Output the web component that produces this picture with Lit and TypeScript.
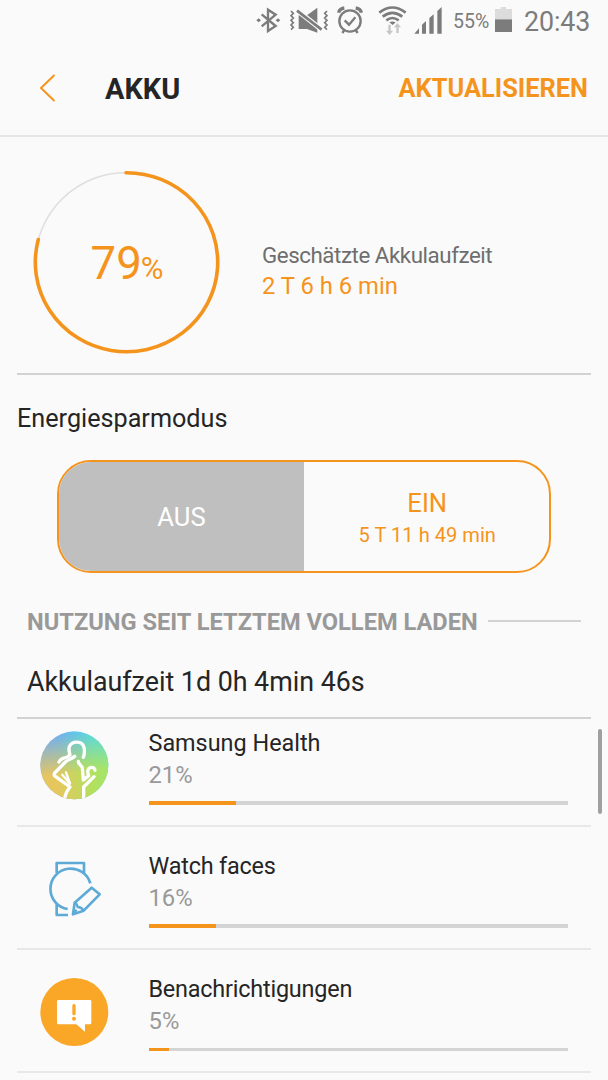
import { LitElement, html, css, svg } from "lit";
import { customElement, property } from "lit/decorators.js";

const healthIcon = html`<svg class="icon" viewBox="0 1 270 270">
  <defs>
    <linearGradient id="sky" x1="0" x2="1" y1="0.1" y2="0"><stop offset="0.25" stop-color="#74b1ee" /><stop offset="0.75" stop-color="#54d8e8" /></linearGradient>
    <linearGradient id="ground" x1="0" x2="1" y1="0.2" y2="0"><stop offset="0.1" stop-color="#e8c65e" /><stop offset="0.62" stop-color="#b2e05e" /><stop offset="1" stop-color="#9de772" /></linearGradient>
    <linearGradient id="fade" x1="0" x2="0.15" y1="0" y2="1"><stop offset="0.2" stop-color="#000" /><stop offset="0.64" stop-color="#fff" /></linearGradient>
    <mask id="m"><rect width="270" height="270" fill="url(#fade)" /></mask>
    <clipPath id="c"><circle cx="133" cy="134" r="102" /></clipPath>
  </defs>
  <circle cx="133" cy="134" r="102" fill="url(#sky)" />
  <g mask="url(#m)"><circle cx="133" cy="134" r="102" fill="url(#ground)" /></g>
  <g clip-path="url(#c)" fill="none" stroke="#fff" stroke-width="10" stroke-linecap="round" stroke-linejoin="round">
    <path d="M160 110c4-9 4-20 2-30-5-20-36-21-44-2-3 9 0 18 2 25-6 7-13 8-21 10-6 2-10 6-12 11" />
    <path d="M134 107c-10 8-22 10-28 17L74 157c-3 4-2 8 3 11l43 31c-7 9-14 20-16 34" />
    <path d="M97 162l23 27-12-34" stroke-width="7" />
    <path d="M145 122c-1 9 10 10 12 20l3 36 16-13c-5-13-3-21 5-24 8-3 14 2 14 8" />
    <path d="M192 168l-31 31v38" />
  </g>
</svg>`;

const watchIcon = html`<svg class="icon" viewBox="-15 -19 270 270" fill="none" stroke="#5eaad7" stroke-width="8" stroke-linejoin="round">
  <path d="M65 68V38h82v31" />
  <path d="M166 99A61 61 0 1 0 98 176" />
  <path d="M65 160v34h34" />
  <path d="M170 112l24 20-48 49-32 11 5-35z" />
  <path d="M119 157c7 3 8 7 9 13 8 0 13 3 18 11M114 192l11-14" stroke-width="7" />
</svg>`;

const noticeIcon = html`<svg class="icon" viewBox="0 5 270 270">
  <circle cx="133" cy="140" r="102" fill="#faa627" />
  <path d="M85 104h95q4 0 4 4v65q0 4-4 4h-15v22l-26-22H85q-4 0-4-4v-65q0-4 4-4z" fill="#fff" />
  <path d="M132 121v24" stroke="#faa627" stroke-width="10" stroke-linecap="round" />
  <circle cx="132" cy="160" r="6" fill="#faa627" />
</svg>`;

@customElement("status-bar")
class StatusBar extends LitElement {
  static styles = css`
    :host { display: flex; align-items: center; height: 42px; padding-left: 255px; color: #7c7c7c; font-family: Roboto, sans-serif; }
    svg { display: block; flex: none; height: 42px; }
    .bt { width: 27px; } .mute { width: 52px; } .alarm { width: 43px; } .wifi { width: 33px; } .signal { width: 33px; }
    .percent { width: 52px; padding-left: 10px; box-sizing: border-box; font-size: 19.5px; }
    .battery { width: 17px; }
    .clock { margin-left: 12px; font-size: 26.8px; letter-spacing: -0.1px; padding-top: 1px; }
  `;
  render() {
    return html`
      <svg class="bt" viewBox="30 0 81 126" fill="none" stroke="#7c7c7c" stroke-width="7"><path d="M50 43l42 35-23 15V29l23 15-42 35" /><path d="M34 61l7-6 7 6-7 6zM92 61l7-6 7 6-7 6z" fill="#7c7c7c" stroke="none" /></svg>
      <svg class="mute" viewBox="111 0 156 126" fill="none" stroke="#7c7c7c"><path d="M161 46h25l31-23v75l-31-11h-25z" fill="#7c7c7c" stroke="none" /><path d="M155 30l76 60" stroke="#fafafa" stroke-width="15" /><path d="M156 32l74 57" stroke-width="8" /><path d="M138 33l7 7-7 7 7 7-7 7 7 7-7 7 7 7-7 7M246 33l-7 7 7 7-7 7 7 7-7 7 7 7-7 7 7 7" stroke-width="5" /></svg>
      <svg class="alarm" viewBox="267 0 129 126" fill="none" stroke="#7c7c7c" stroke-width="7"><circle cx="315" cy="63" r="32" /><path d="M299 61l13 13 19-22" /><path d="M281 38q2-12 17-14M349 38q-2-12-17-14" stroke-width="10" /><path d="M298 90l-6 9M332 90l6 9" stroke-width="7" /></svg>
      <svg class="wifi" viewBox="384 0 99 126" fill="none" stroke="#7c7c7c" stroke-width="8"><path d="M391 38q39-31 79 0M401 50q29-23 59 0M412 61q18-14 37 0" /><path d="M421 67q9-5 19 0l-9 8z" fill="#7c7c7c" stroke="none" /><path d="M418 74h7v18h7l-10 13-11-13h7zM442 99h7V82h7l-11-13-10 13h7z" fill="#c6c6c6" stroke="none" /></svg>
      <svg class="signal" viewBox="495 0 99 126" fill="#7c7c7c"><path d="M508 101l14-16v16zM531 74l12-11v38h-12zM553 54l13-11v58h-13zM577 33l13-12v80h-13z" /></svg>
      <span class="percent">55%</span>
      <svg class="battery" viewBox="195 0 51 126"><path d="M195 27h17v-6h16v6h18v31h-51z" fill="#dcdcdc" /><path d="M195 58h51v38h-51z" fill="#7c7c7c" /></svg>
      <span class="clock">20:43</span>
    `;
  }
}

@customElement("usage-row")
class UsageRow extends LitElement {
  @property() name = "";
  @property({ type: Number }) percent = 0;
  @property({ attribute: false }) icon: unknown;
  static styles = css`
    :host { display: flex; box-sizing: border-box; height: 123.2px; margin: 0 17px; padding: 23.3px 0 0 13px; border-bottom: 2px solid #e8e8e8; }
    .icon { display: block; flex: none; width: 90px; height: 90px; margin-top: -6px; }
    .body { width: 419px; margin-left: 28.5px; }
    .name { height: 32px; line-height: 32px; font-size: 23.4px; color: #252525; white-space: nowrap; }
    :host([tight]) .name { letter-spacing: -0.2px; }
    .value { height: 32px; line-height: 33px; font-size: 23.8px; color: #999; }
    .track { height: 3.6px; margin-top: 10.4px; background: #d4d4d4; }
    .fill { height: 100%; background: #f5941c; }
  `;
  render() {
    return html`${this.icon}
      <div class="body">
        <div class="name">${this.name}</div>
        <div class="value">${this.percent}%</div>
        <div class="track"><div class="fill" style="width:${this.percent}%"></div></div>
      </div>`;
  }
}

@customElement("app-root")
class AppRoot extends LitElement {
  static styles = css`
    :host { display: block; position: relative; height: 1080px; overflow: hidden; background: #fafafa; color: #252525; font-family: Roboto, sans-serif; white-space: nowrap; }
    .appbar { display: flex; align-items: center; box-sizing: border-box; height: 95px; padding: 0 20px 0 38px; border-bottom: 2px solid #e6e6e6; }
    .back { width: 20px; height: 30px; margin-top: -1px; }
    h1 { margin: 0 auto 0 47px; font-size: 28.9px; font-weight: 700; }
    .action { font-size: 25.4px; font-weight: 700; color: #f5941c; padding-bottom: 2px; }
    .summary { display: flex; align-items: center; box-sizing: border-box; height: 237.5px; margin: 0 17px; padding: 15px 0 0 13px; border-bottom: 2px solid #d2d2d2; }
    .gauge { display: grid; place-items: center; width: 194px; height: 190px; }
    .ring { grid-area: 1 / 1; width: 194px; height: 190px; }
    .level { grid-area: 1 / 1; font-size: 45.5px; color: #f5941c; line-height: 60px; padding-top: 8px; }
    .level small { font-size: 31px; margin-left: -1px; }
    .estimate { margin: 18px 0 0 38px; line-height: 31.5px; }
    .caption { font-size: 22.3px; letter-spacing: -0.43px; color: #6e6e6e; }
    .remaining { font-size: 23.8px; color: #f5941c; }
    .mode-title { height: 40px; line-height: 40px; margin: 24px 0 0 17px; font-size: 25.2px; }
    .toggle { display: flex; box-sizing: border-box; width: 494px; height: 113px; margin: 21.5px 0 0 57px; border: 2px solid #f5941c; border-radius: 34px; overflow: hidden; }
    .off, .on { display: flex; flex-direction: column; align-items: center; justify-content: center; width: 245px; font-size: 25.6px; }
    .off { background: #bfbfbf; color: #fff; }
    .on { color: #f5941c; line-height: 32px; padding: 4px 0 0 1.5px; box-sizing: border-box; }
    .on small { font-size: 20.1px; }
    .section { display: flex; align-items: center; height: 30px; margin: 34px 27px 0; font-size: 23.63px; font-weight: 700; color: #999; }
    .rule { flex: 1; height: 2.5px; margin: 0 0 2px 10px; background: #d2d2d2; }
    .runtime { height: 40px; line-height: 40px; margin: 25px 0 0 27px; font-size: 26.8px; }
    .list { margin-top: 14.5px; height: 363px; overflow: hidden; }
    .clip { height: 2px; margin: 0 17px; background: #d2d2d2; }
    .first { margin-top: -15px; }
    .scroll { position: absolute; right: 6px; top: 729px; width: 4.5px; height: 84.5px; border-radius: 2px; background: #a0a0a0; }
  `;
  render() {
    return html`
      <status-bar></status-bar>
      <header class="appbar">
        <svg class="back" viewBox="0 0 20 30" fill="none" stroke="#f5941c" stroke-width="2"><path d="M16.500 2L3 15l13.500 13" /></svg>
        <h1>AKKU</h1>
        <span class="action">AKTUALISIEREN</span>
      </header>
      <section class="summary">
        <div class="gauge">
          <svg class="ring" viewBox="30 168 194 190" fill="none">
            ${svg`<ellipse cx="127" cy="263" rx="91.500" ry="89.500" stroke="#dededf" stroke-width="1.500"/>
            <path d="M126 173.700A91.200 89.500 0 1 1 38.300 240.500" stroke="#f5941c" stroke-width="3.600" stroke-linecap="round"/>`}
          </svg>
          <div class="level">79<small>%</small></div>
        </div>
        <div class="estimate">
          <div class="caption">Geschätzte Akkulaufzeit</div>
          <div class="remaining">2 T 6 h 6 min</div>
        </div>
      </section>
      <div class="mode-title">Energiesparmodus</div>
      <div class="toggle">
        <div class="off">AUS</div>
        <div class="on"><span>EIN</span><small>5 T 11 h 49 min</small></div>
      </div>
      <div class="section">NUTZUNG SEIT LETZTEM VOLLEM LADEN<span class="rule"></span></div>
      <div class="runtime">Akkulaufzeit 1d 0h 4min 46s</div>
      <div class="list">
        <div class="clip"></div>
        <usage-row class="first" name="Samsung Health" .percent=${21} .icon=${healthIcon}></usage-row>
        <usage-row tight name="Watch faces" .percent=${16} .icon=${watchIcon}></usage-row>
        <usage-row tight name="Benachrichtigungen" .percent=${5} .icon=${noticeIcon}></usage-row>
      </div>
      <div class="scroll"></div>
    `;
  }
}
